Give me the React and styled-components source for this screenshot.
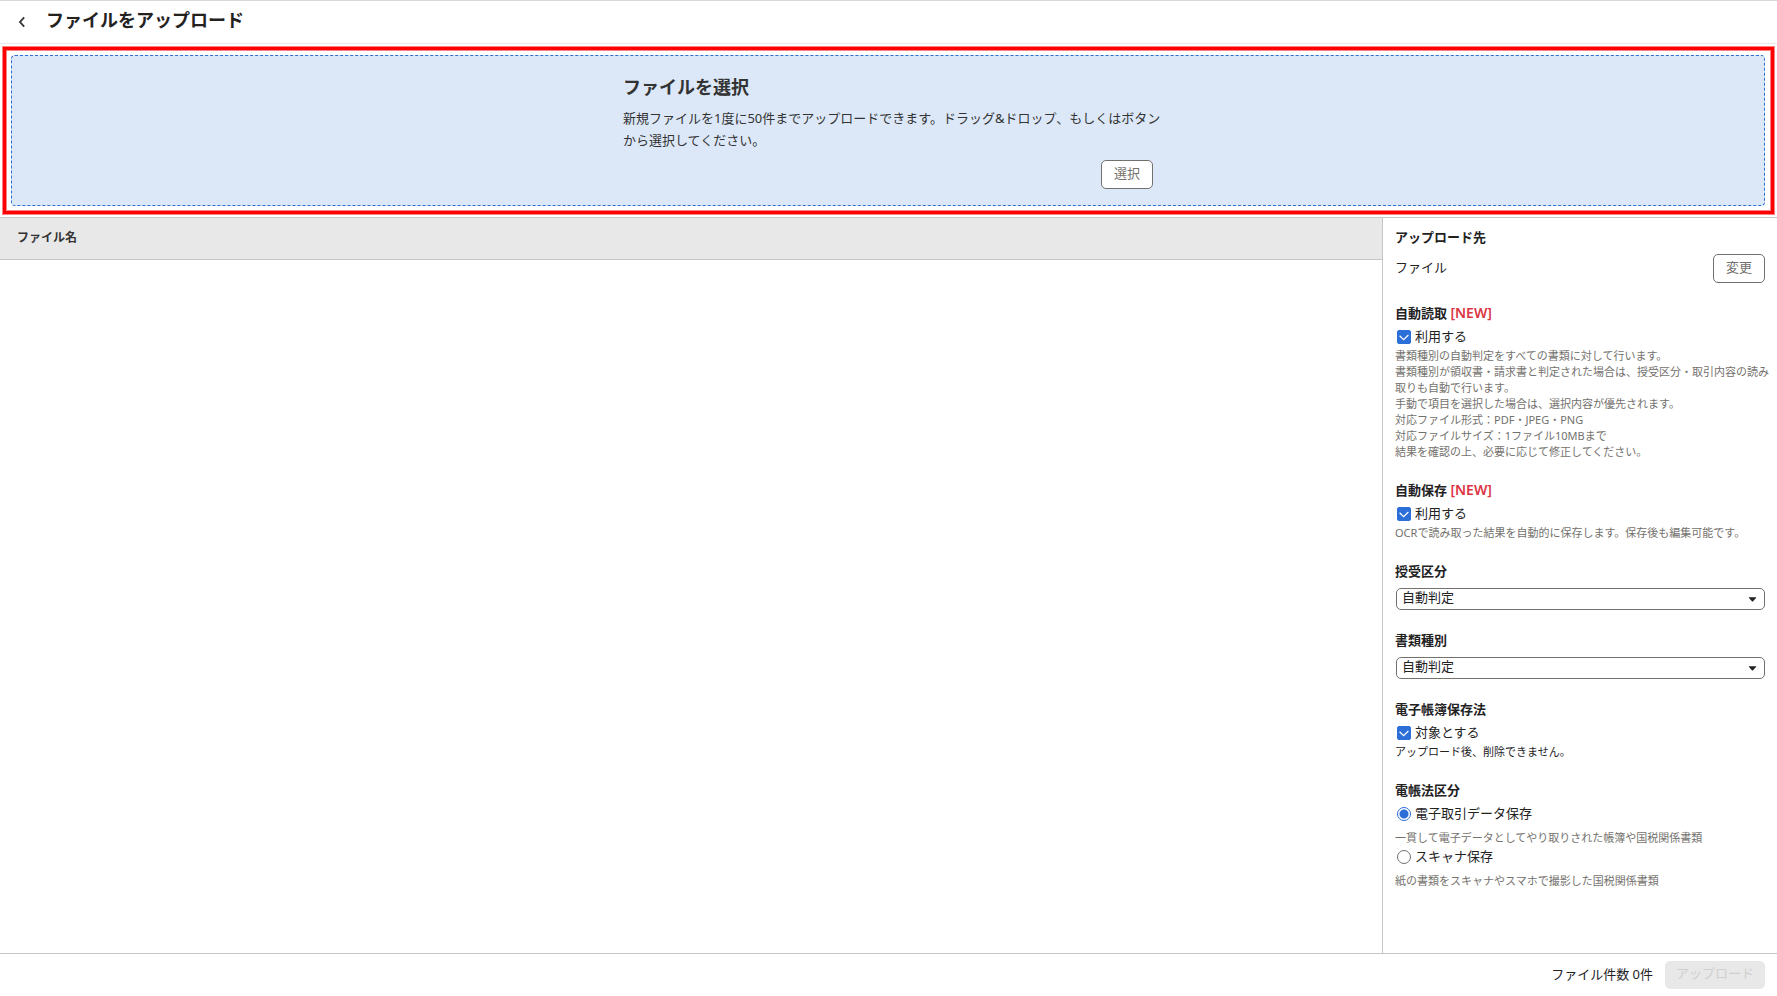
import React, { useState } from "react";
import styled, { createGlobalStyle } from "styled-components";

const GlobalStyle = createGlobalStyle`
  *, *::before, *::after { box-sizing: border-box; }
  body {
    margin: 0;
    background: #fff;
    color: #23221f;
    font-family: "Noto Sans", "Noto Sans CJK JP", sans-serif;
    font-size: 13px;
    line-height: 22px;
  }
  button, select, input { font: inherit; color: inherit; }
  h1, h2, h3, p { margin: 0; }
`;

const Page = styled.div`
  display: flex;
  flex-direction: column;
  min-height: 100vh;
`;

const Header = styled.header`
  display: flex;
  align-items: center;
  height: 44px;
  gap: 13px;
  padding: 0 11px 5px;
  border-top: 1px solid #d4d7db;
  border-bottom: 1px solid #e9e9e9;
`;

const BackButton = styled.button`
  display: flex;
  align-items: center;
  justify-content: center;
  width: 22px;
  height: 22px;
  padding: 5px 0 0;
  border: 0;
  background: none;
  cursor: pointer;
`;

const PageTitle = styled.h1`
  font-size: 18px;
  line-height: 28px;
`;

const Frame = styled.section`
  margin: 3px;
  padding: 5px 6px 5px 5px;
  border: 3px solid #f00;
  box-shadow: 0 0 0 1px #ff8080, inset 0 0 0 1px #ff8080;
`;

const DropZone = styled.div`
  display: flex;
  justify-content: center;
  padding: 19px 16px 16px;
  border: 1px dashed #2e6fd3;
  border-radius: 4px;
  background: #dce8f8;
`;

const DropContent = styled.div`
  display: flex;
  flex-direction: column;
  width: 530px;
  color: #333;
`;

const DropTitle = styled.h2`
  margin-bottom: 8px;
  font-size: 18px;
  line-height: 24px;
`;

const DropText = styled.p`
  margin-bottom: 9px;
  white-space: nowrap;
`;

const OutlineButton = styled.button`
  align-self: flex-end;
  flex: none;
  height: 29px;
  padding: 0 12px 4px;
  border: 1px solid #73716d;
  border-radius: 5px;
  background: #fff;
  color: #73716d;
  cursor: pointer;
`;

const Body = styled.main`
  display: flex;
  flex: 1;
  border-top: 1px solid #c6c6c6;
`;

const FileArea = styled.div`
  flex: 1;
  min-width: 0;
`;

const FileTable = styled.table`
  width: 100%;
  border-collapse: separate;
  border-spacing: 0;

  th {
    height: 42px;
    padding: 0 17px 2px;
    border-bottom: 1px solid #c6c6c6;
    background: #e8e8e8;
    color: #333;
    font-size: 12px;
    text-align: left;
  }
`;

const Sidebar = styled.aside`
  display: flex;
  flex: none;
  flex-direction: column;
  gap: 21px;
  width: 395px;
  padding: 10px 12px 16px;
  border-left: 1px solid #c6c6c6;
`;

const Group = styled.section`
  display: flex;
  flex-direction: column;
`;

const GroupTitle = styled.h3`
  padding-bottom: 2px;
  font-size: 13px;
  font-weight: 700;
  line-height: 18px;
`;

const NewMark = styled.span`
  color: #dc3545;
  font-size: 14px;
  font-weight: 600;
`;

const DestinationRow = styled.div`
  display: flex;
  align-items: center;
  justify-content: space-between;
  margin-top: 6px;
`;

const RaisedText = styled.span`
  padding-bottom: 3px;
`;

const Choice = styled.label`
  display: flex;
  align-items: center;
  gap: 4px;
  height: 22px;
  margin-top: ${(p) => (p.$tight ? 0 : 2)}px;
  padding-left: 2px;
  cursor: pointer;
`;

const ChoiceBox = styled.span`
  position: relative;
  display: flex;
  width: 14px;
  height: 14px;

  svg {
    position: absolute;
    inset: 0;
    pointer-events: none;
  }
`;

const CheckInput = styled.input`
  appearance: none;
  width: 14px;
  height: 14px;
  margin: 0;
  border: 1px solid #73716d;
  border-radius: 2px;
  background: #fff;

  &:checked {
    border-color: #2c6fd8;
    background: #2c6fd8;
  }
`;

const RadioInput = styled.input`
  appearance: none;
  width: 14px;
  height: 14px;
  margin: 0;
  border: 1px solid #73716d;
  border-radius: 50%;
  background: #fff;

  &:checked {
    border-color: #2c6fd8;
    background: radial-gradient(circle, #2c6fd8 4px, #fff 5px);
  }
`;

const Help = styled.p`
  margin-top: ${(p) => (p.$spaced ? 5 : 0)}px;
  color: ${(p) => (p.$strong ? "#23221f" : "#73716d")};
  font-size: 11px;
  line-height: 16px;
  white-space: nowrap;
`;

const SelectWrap = styled.div`
  position: relative;
  margin-top: 6px;
  padding-left: 1px;

  svg {
    position: absolute;
    top: 9px;
    right: 8px;
    pointer-events: none;
  }
`;

const Select = styled.select`
  display: block;
  appearance: none;
  width: 100%;
  height: 22px;
  padding: 0 24px 3px 5px;
  border: 1px solid #73716d;
  border-radius: 5px;
  background: #fff;
  line-height: 17px;
`;

const Footer = styled.footer`
  display: flex;
  align-items: center;
  justify-content: flex-end;
  gap: 12px;
  height: 43px;
  padding: 0 12px;
  border-top: 1px solid #c6c6c6;
`;

const UploadButton = styled.button`
  height: 28px;
  padding: 0 11px 5px;
  border: 0;
  border-radius: 5px;
  background: #e8e8e8;
  color: #cfcfcf;
`;

function Check({ label }) {
  const [on, setOn] = useState(true);
  return (
    <Choice>
      <ChoiceBox>
        <CheckInput type="checkbox" checked={on} onChange={() => setOn(!on)} />
        {on && (
          <svg width="14" height="14" viewBox="0 0 14 14" fill="none" stroke="#fff" strokeWidth="1.2">
            <path d="M2.6 5.8 L6.6 9.6 L11.4 5" />
          </svg>
        )}
      </ChoiceBox>
      <RaisedText>{label}</RaisedText>
    </Choice>
  );
}

function Radio({ label, value, selected, onSelect, tight }) {
  return (
    <Choice $tight={tight}>
      <RadioInput
        type="radio"
        name="kind"
        value={value}
        checked={selected === value}
        onChange={() => onSelect(value)}
      />
      <RaisedText>{label}</RaisedText>
    </Choice>
  );
}

function SelectGroup({ id, title }) {
  return (
    <Group>
      <GroupTitle as="label" htmlFor={id}>
        {title}
      </GroupTitle>
      <SelectWrap>
        <Select id={id} defaultValue="auto">
          <option value="auto">自動判定</option>
        </Select>
        <svg width="9" height="5" viewBox="0 0 9 5" fill="#23221f">
          <path d="M1 0.3 H8 Q8.4 0.5 8 1 L5.1 4.2 Q4.5 4.8 3.9 4.2 L1 1 Q0.6 0.5 1 0.3 Z" />
        </svg>
      </SelectWrap>
    </Group>
  );
}

export default function App() {
  const [kind, setKind] = useState("electronic");
  return (
    <Page>
      <GlobalStyle />
      <Header>
        <BackButton type="button" aria-label="戻る">
          <svg width="8" height="12" viewBox="0 0 8 12" fill="none" stroke="#333" strokeWidth="1.8">
            <path d="M6.2 1.4 L2 6 L6.2 10.6" />
          </svg>
        </BackButton>
        <PageTitle>ファイルをアップロード</PageTitle>
      </Header>

      <Frame>
        <DropZone>
          <DropContent>
            <DropTitle>ファイルを選択</DropTitle>
            <DropText>
              新規ファイルを1度に50件までアップロードできます。ドラッグ&amp;ドロップ、もしくはボタン
              <br />
              から選択してください。
            </DropText>
            <OutlineButton type="button">選択</OutlineButton>
          </DropContent>
        </DropZone>
      </Frame>

      <Body>
        <FileArea>
          <FileTable>
            <thead>
              <tr>
                <th scope="col">ファイル名</th>
              </tr>
            </thead>
          </FileTable>
        </FileArea>

        <Sidebar>
          <Group>
            <GroupTitle>アップロード先</GroupTitle>
            <DestinationRow>
              <RaisedText>ファイル</RaisedText>
              <OutlineButton type="button">変更</OutlineButton>
            </DestinationRow>
          </Group>

          <Group>
            <GroupTitle>
              自動読取 <NewMark>[NEW]</NewMark>
            </GroupTitle>
            <Check label="利用する" />
            <Help>
              書類種別の自動判定をすべての書類に対して行います。
              <br />
              書類種別が領収書・請求書と判定された場合は、授受区分・取引内容の読み
              <br />
              取りも自動で行います。
              <br />
              手動で項目を選択した場合は、選択内容が優先されます。
              <br />
              対応ファイル形式：PDF・JPEG・PNG
              <br />
              対応ファイルサイズ：1ファイル10MBまで
              <br />
              結果を確認の上、必要に応じて修正してください。
            </Help>
          </Group>

          <Group>
            <GroupTitle>
              自動保存 <NewMark>[NEW]</NewMark>
            </GroupTitle>
            <Check label="利用する" />
            <Help>OCRで読み取った結果を自動的に保存します。保存後も編集可能です。</Help>
          </Group>

          <SelectGroup id="transfer" title="授受区分" />
          <SelectGroup id="doctype" title="書類種別" />

          <Group>
            <GroupTitle>電子帳簿保存法</GroupTitle>
            <Check label="対象とする" />
            <Help $strong>アップロード後、削除できません。</Help>
          </Group>

          <Group>
            <GroupTitle>電帳法区分</GroupTitle>
            <Radio label="電子取引データ保存" value="electronic" selected={kind} onSelect={setKind} />
            <Help $spaced>一貫して電子データとしてやり取りされた帳簿や国税関係書類</Help>
            <Radio label="スキャナ保存" value="scanner" selected={kind} onSelect={setKind} tight />
            <Help $spaced>紙の書類をスキャナやスマホで撮影した国税関係書類</Help>
          </Group>
        </Sidebar>
      </Body>

      <Footer>
        <RaisedText>ファイル件数 0件</RaisedText>
        <UploadButton type="button" disabled>
          アップロード
        </UploadButton>
      </Footer>
    </Page>
  );
}
